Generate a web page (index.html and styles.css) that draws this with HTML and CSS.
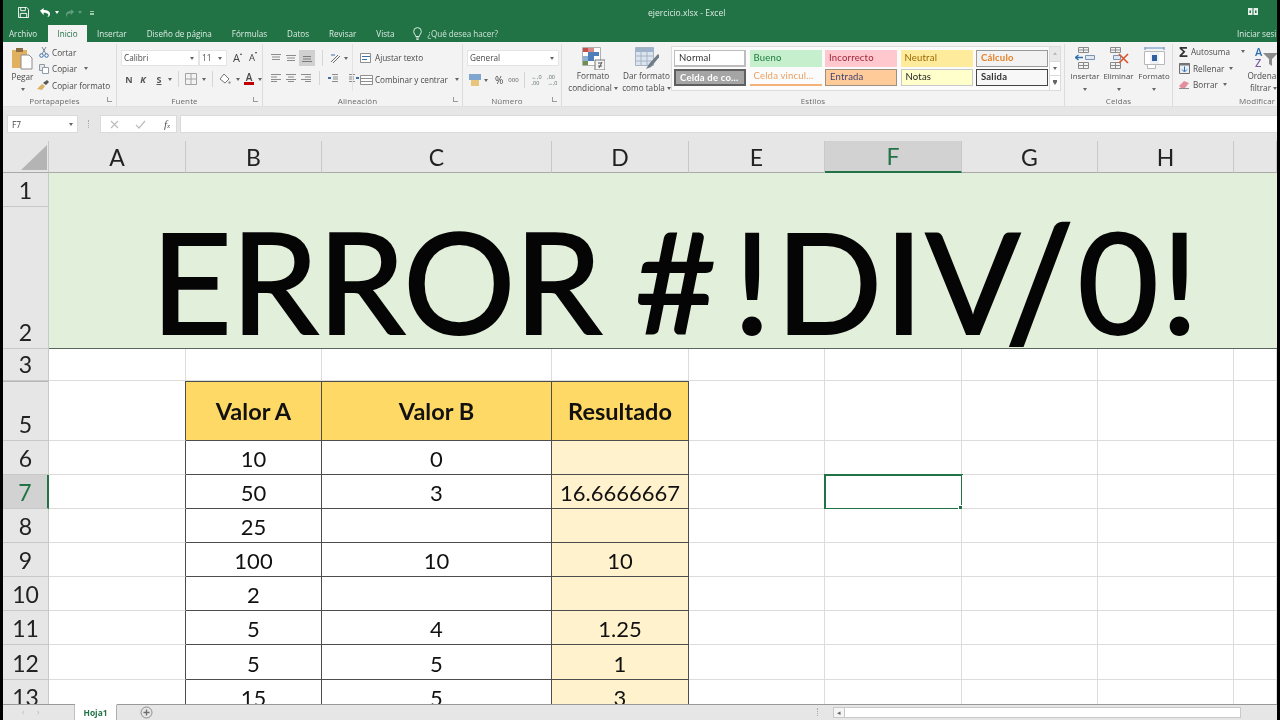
FILE: index.html
```html
<!DOCTYPE html>
<html lang="es">
<head>
<meta charset="utf-8">
<title>ejercicio.xlsx - Excel</title>
<link rel="stylesheet" href="styles.css">
</head>
<body>
<div class="app">
  <header class="titlebar">
    <div class="qat">
      <svg class="q-save" width="11" height="11" viewBox="0 0 12 12"><path d="M.5.5h9l2 2v9H.5z" fill="none" stroke="#fff"/><path d="M3 .5v3.5h5V.5M2.5 11.5V7h7v4.5" fill="none" stroke="#fff"/></svg>
      <svg class="q-undo" width="12" height="11" viewBox="0 0 13 12"><path d="M1 4l4-3v2.200c4 0 7 1.500 7 4.300 0 1.500-1 3-3 3.500 1-1 1.300-2 1-3-.5-1.300-2.500-1.800-5-1.800V9z" fill="#fff"/></svg>
      <span class="ar ar-w q-a1"></span>
      <svg class="q-redo" width="10" height="10" viewBox="0 0 12 11"><path d="M11 4L7 1v2.200C3 3.200 1 5 1 7.500 1 9 2 10 3 10.500 2 9 2 8 3 7c1-.8 2.500-1.200 4-1.200V8z" fill="#5f9d7e"/></svg>
      <span class="ar ar-f q-a2"></span>
      <span class="q-more"></span>
    </div>
    <div class="doc">ejercicio.xlsx - Excel</div>
    <svg class="book" width="10" height="7" viewBox="0 0 10 7"><path d="M0 0h4.500v7H0zM5.500 0H10v7H5.500z" fill="#e4efe9"/><path d="M1.500 2.500h1.500v2.500H1.500zM7 2.500h1.500v2.500H7z" fill="#217346"/></svg>
  </header>
  <nav class="tabs">
    <span class="tab t-file">Archivo</span>
    <span class="tab active">Inicio</span>
    <span class="tab">Insertar</span>
    <span class="tab">Diseño de página</span>
    <span class="tab">Fórmulas</span>
    <span class="tab">Datos</span>
    <span class="tab">Revisar</span>
    <span class="tab">Vista</span>
    <span class="tell">
      <svg width="9" height="13" viewBox="0 0 9 13"><path d="M2.700 9.500C2.500 7.500.7 6.700.7 4.400a3.800 3.800 0 0 1 7.600 0c0 2.300-1.800 3.100-2 5.100zM3 11h3M3.500 12.500h2" fill="none" stroke="#dcebe3"/></svg>
      ¿Qué desea hacer?
    </span>
    <span class="signin">Iniciar sesi</span>
  </nav>

  <section class="ribbon">
    <div class="group g-clip">
      <div class="g-body">
        <div class="paste">
          <svg width="21" height="23" viewBox="0 0 21 23"><path d="M0 3h15v18H0z" fill="#e1b160"/><path d="M4 1h7v4H4z" fill="#8a6d45"/><path d="M9 8h8l3 3v11H9z" fill="#fff" stroke="#8b8b8b"/></svg>
          <span class="lbl">Pegar</span>
          <span class="ar"></span>
        </div>
        <div class="clip-list">
          <div class="cl-row"><svg width="10" height="11" viewBox="0 0 10 11"><path d="M7 0L3 7M3 0l4 7" stroke="#7a8794" fill="none"/><circle cx="2.500" cy="8.500" r="1.800" fill="none" stroke="#3f6fa8"/><circle cx="7.500" cy="8.500" r="1.800" fill="none" stroke="#3f6fa8"/></svg>Cortar</div>
          <div class="cl-row"><svg width="10" height="10" viewBox="0 0 10 10"><path d="M.5.5h5v6h-5z" fill="#e8e8e8" stroke="#8e9aa8"/><path d="M3.500 3.500h6v6h-6z" fill="#fff" stroke="#8e9aa8"/></svg>Copiar <span class="ar ar-in"></span></div>
          <div class="cl-row"><svg class="cl-paint" width="12" height="10" viewBox="0 0 12 10"><path d="M0 9l5-5 3 2-3 4z" fill="#dcb163"/><path d="M6 3l4-3 2 2-3 3z" fill="#555"/></svg>Copiar formato</div>
        </div>
      </div>
      <div class="g-label launcher">Portapapeles<i class="launch"></i></div>
    </div>

    <div class="group g-font">
      <div class="g-body col">
        <div class="row r-font1">
          <span class="combo c-font">Calibri<span class="ar"></span></span>
          <span class="combo c-size">11<span class="ar"></span></span>
          <span class="grow">A<sup>▴</sup></span>
          <span class="shrink">A<sup>▾</sup></span>
        </div>
        <div class="row r-font2">
          <b class="fb">N</b><b class="fb fi">K</b><b class="fb fu">S</b><span class="ar"></span>
          <span class="vsep"></span>
          <svg class="ic-b" width="12" height="12" viewBox="0 0 12 12"><path d="M.5.5h11v11H.5zM6 .5v11M.5 6h11" fill="none" stroke="#a3a3a3"/></svg><span class="ar"></span>
          <span class="vsep"></span>
          <svg class="ic-f" width="12" height="12" viewBox="0 0 12 12"><path d="M5 1l5 5-4 4-5-4z" fill="#fff" stroke="#777"/><circle cx="10.500" cy="9.500" r="1.200" fill="#999"/></svg><span class="ar"></span>
          <span class="fcolor">A</span><span class="ar"></span>
        </div>
      </div>
      <div class="g-label launcher">Fuente<i class="launch"></i></div>
    </div>

    <div class="group g-align">
      <div class="g-body">
        <div class="al-icons">
          <div class="row al1">
            <svg width="10" height="8" viewBox="0 0 10 8"><path d="M0 .5h10M1 3h8M1 5.500h8" stroke="#8c8c8c"/></svg>
            <svg width="10" height="8" viewBox="0 0 10 8"><path d="M0 1.500h10M1 4h8M1 6.500h8" stroke="#8c8c8c"/></svg>
            <span class="sel"><svg width="10" height="8" viewBox="0 0 10 8"><path d="M1 2.500h8M1 5h8M0 7.500h10" stroke="#7a7a7a"/></svg></span>
            <span class="vsep"></span>
            <svg class="orient" width="11" height="11" viewBox="0 0 11 11"><path d="M1 9L8 2M3 10l7-7" stroke="#6e6e6e" fill="none"/><path d="M1 2h4" stroke="#3f6fa8"/></svg><span class="ar"></span>
          </div>
          <div class="row al2">
            <svg width="10" height="8" viewBox="0 0 10 8"><path d="M0 .5h10M0 3h6M0 5.500h10M0 7.500h6" stroke="#8c8c8c"/></svg>
            <svg width="10" height="8" viewBox="0 0 10 8"><path d="M0 .5h10M2 3h6M0 5.500h10M2 7.500h6" stroke="#8c8c8c"/></svg>
            <svg width="10" height="8" viewBox="0 0 10 8"><path d="M0 .5h10M4 3h6M0 5.500h10M4 7.500h6" stroke="#8c8c8c"/></svg>
            <span class="vsep"></span>
            <svg width="10" height="8" viewBox="0 0 10 8"><path d="M4 .5h6M5 3h5M5 5h5M4 7.500h6" stroke="#8c8c8c"/><path d="M0 4h3" stroke="#3f6fa8" stroke-width="2"/></svg>
            <svg class="ind2" width="10" height="8" viewBox="0 0 10 8"><path d="M0 .5h6M0 3h5M0 5h5M0 7.500h6" stroke="#8c8c8c"/><path d="M7 4h3" stroke="#3f6fa8" stroke-width="2"/></svg>
          </div>
        </div>
        <div class="wrap">
          <div class="wr"><svg width="13" height="10" viewBox="0 0 13 10"><path d="M.5.5h10v9H.5z" fill="#fff" stroke="#8e8e8e"/><path d="M2 3.500h8M2 6.500h5" stroke="#3f6fa8"/></svg>Ajustar texto</div>
          <div class="wr"><svg width="13" height="10" viewBox="0 0 13 10"><path d="M.5.5h12v9H.5z" fill="#fff" stroke="#8e8e8e"/><path d="M1 3.500h11M1 6.500h11" stroke="#8e8e8e"/></svg>Combinar y centrar<span class="ar ar-m"></span></div>
        </div>
      </div>
      <div class="g-label launcher">Alineación<i class="launch"></i></div>
    </div>

    <div class="group g-num">
      <div class="g-body col">
        <span class="combo c-num">General<span class="ar"></span></span>
        <div class="row r-num">
          <svg width="12" height="12" viewBox="0 0 12 12"><path d="M0 0h12v6H0z" fill="#7ea6cf"/><path d="M2 6h8v6H2z" fill="#e7c67c"/></svg><span class="ar"></span>
          <span class="pct">%</span><span class="k">000</span>
          <span class="vsep"></span>
          <span class="dec">←,0<br>,00</span><span class="dec d2">,00<br>→,0</span>
        </div>
      </div>
      <div class="g-label launcher">Número<i class="launch"></i></div>
    </div>

    <div class="group g-styles">
      <div class="g-body">
        <div class="big b-cf">
          <svg width="23" height="23" viewBox="0 0 23 23"><path d="M.5.5h18v18H.5z" fill="#fff" stroke="#b0b0b0"/><path d="M1 1h5v4H1z" fill="#c5504b"/><path d="M6 1h6v4H6z" fill="#d98a86"/><path d="M6 5h11v4H6z" fill="#4f7fb8"/><path d="M1 9h5v5H1z" fill="#8fb0d6"/><path d="M6 9h6v5H6z" fill="#4f7fb8"/><path d="M1 14h5v4H1z" fill="#6f8f4f"/><path d="M13 13h10v10H13z" fill="#f4f4f4" stroke="#777"/><path d="M16 16h4M16 19h4M20 15l-3 6" stroke="#555" fill="none"/></svg>
          <span class="lbl">Formato<br>condicional<span class="ar ar-in"></span></span>
        </div>
        <div class="big b-tf">
          <svg width="24" height="23" viewBox="0 0 24 23"><path d="M.5.5h18v18H.5z" fill="#dbe5f1" stroke="#a8b4c2"/><path d="M1 1h18v4H1z" fill="#9fb3cd"/><path d="M6 1v18M12 1v18M1 9h18M1 14h18" stroke="#a8b4c2"/><path d="M23 7l-9 10-3 5 5-2 9-11z" fill="#707b86"/></svg>
          <span class="lbl">Dar formato<br>como tabla<span class="ar ar-in"></span></span>
        </div>
        <div class="gallery">
          <div class="cells">
            <span class="st s-normal">Normal</span>
            <span class="st s-good">Bueno</span>
            <span class="st s-bad">Incorrecto</span>
            <span class="st s-neutral">Neutral</span>
            <span class="st s-calc">Cálculo</span>
            <span class="st s-check">Celda de co...</span>
            <span class="st s-link">Celda vincul...</span>
            <span class="st s-input">Entrada</span>
            <span class="st s-note">Notas</span>
            <span class="st s-out">Salida</span>
          </div>
          <div class="scroll">
            <span class="sb off"><i class="ar ar-up"></i></span>
            <span class="sb"><i class="ar"></i></span>
            <span class="sb"><i class="ar ar-line"></i></span>
          </div>
        </div>
      </div>
      <div class="g-label">Estilos</div>
    </div>

    <div class="group g-cells">
      <div class="g-body">
        <div class="cellbtn b-ins">
          <svg width="20" height="22" viewBox="0 0 20 22"><path d="M3.500.5h10v5h-10zM3.500 15.500h10v6h-10zM8.500 15.500v6M3.500 18.500h10M8.500.5v5M3.500 3h10" fill="none" stroke="#8a8a8a"/><path d="M10.500 8.500h9v4h-9z" fill="#dfe8f2" stroke="#7a94b0"/><path d="M0 10.500h8M3.500 8l-3 2.500 3 2.500" fill="none" stroke="#2f6fb0" stroke-width="1.300"/></svg>
          <span class="lbl">Insertar</span><span class="ar"></span>
        </div>
        <div class="cellbtn b-del">
          <svg width="21" height="22" viewBox="0 0 21 22"><path d="M2.500.5h10v5h-10zM2.500 15.500h10v6h-10zM7.500 15.500v6M2.500 18.500h10M7.500.5v5M2.500 3h10" fill="none" stroke="#8a8a8a"/><path d="M5.500 8.500h7v4h-7z" fill="#dfe8f2" stroke="#7a94b0"/><path d="M11 7l9 9M20 7l-9 9" stroke="#d9532c" stroke-width="1.600"/></svg>
          <span class="lbl">Eliminar</span><span class="ar"></span>
        </div>
        <div class="cellbtn b-fmt">
          <svg width="21" height="22" viewBox="0 0 21 22"><path d="M.5 4.500h20v13H.5z" fill="#fff" stroke="#b8b8b8"/><path d="M6 5h9v12H6z" fill="#eef2f7"/><path d="M8 8h5v6H8z" fill="#2f5f9e"/><path d="M1 1h19M1 0v3M20 0v3" stroke="#5b8ac0" fill="none"/><path d="M3.500 17.500h8v4h-8z" fill="#fff" stroke="#b8b8b8"/></svg>
          <span class="lbl">Formato</span><span class="ar"></span>
        </div>
      </div>
      <div class="g-label">Celdas</div>
    </div>

    <div class="group g-edit">
      <div class="g-body">
        <div class="ed-list">
          <div class="ed-row"><span class="sigma">Σ</span>Autosuma<span class="ar ar-w8"></span></div>
          <div class="ed-row"><svg width="11" height="11" viewBox="0 0 11 11"><path d="M.5.5h10v10H.5z" fill="#e6eef7" stroke="#6d6d6d"/><path d="M.5.5h10v2H.5z" fill="#777"/><path d="M5.500 3.500v5M3 6.500l2.500 2.500L8 6.500" fill="none" stroke="#2f6fb0"/></svg>Rellenar<span class="ar ar-in"></span></div>
          <div class="ed-row"><svg width="11" height="9" viewBox="0 0 11 9"><path d="M0 6l5-5 5 2-4 5H2z" fill="#e58f9b"/><path d="M0 8.500h10" stroke="#8b8b8b"/></svg>Borrar<span class="ar ar-in"></span></div>
        </div>
        <div class="sort">
          <svg width="23" height="22" viewBox="0 0 23 22"><text class="az a1" x="0" y="9">A</text><text class="az z1" x="0" y="20">Z</text><path d="M8 6h15l-6 6v7l-3-2v-5z" fill="#8b8b8b"/></svg>
          <span class="lbl">Ordenar<br>filtrar<span class="ar ar-in"></span></span>
        </div>
      </div>
      <div class="g-label mod">Modificar</div>
    </div>
  </section>

  <div class="gap"></div>
  <div class="fbar">
    <span class="namebox">F7<span class="ar"></span></span>
    <span class="dots"></span>
    <span class="fbtns">
      <svg width="9" height="9" viewBox="0 0 9 9"><path d="M1 1l7 7M8 1L1 8" stroke="#bdbdbd" stroke-width="1.200"/></svg>
      <svg width="11" height="9" viewBox="0 0 11 9"><path d="M1 5l3 3 6-7" fill="none" stroke="#bdbdbd" stroke-width="1.200"/></svg>
      <i class="fx">f<small>x</small></i>
    </span>
    <span class="finput"></span>
  </div>
  <div class="gap"></div>

  <div class="sheetwrap">
    <table class="sheet">
      <colgroup>
        <col class="c0"><col class="w137"><col class="w136"><col class="w230"><col class="w137"><col class="w136"><col class="w137"><col class="w136"><col class="w136"><col class="c9">
      </colgroup>
      <thead>
        <tr class="h0">
          <th class="corner"><svg width="28" height="27" viewBox="0 0 28 27"><path d="M27 1v25H1z" fill="#b4b4b4"/></svg></th>
          <th>A</th><th>B</th><th>C</th><th>D</th><th>E</th><th class="hsel">F</th><th>G</th><th>H</th><th></th>
        </tr>
      </thead>
      <tbody>
        <tr class="h1"><th class="rh">1</th><td class="banner" colspan="9" rowspan="2"><div class="bigtext"><span class="w-err">ERROR</span> <span class="w-hash">#</span><span class="w-bang">!</span>DIV<span class="slash">/</span>0!</div></td></tr>
        <tr class="h2"><th class="rh">2</th></tr>
        <tr class="h3"><th class="rh">3</th><td></td><td></td><td></td><td></td><td></td><td></td><td></td><td></td><td></td></tr>
        <tr class="h5"><th class="rh hid">5</th><td class="lb"></td><td class="y">Valor A</td><td class="y">Valor B</td><td class="y">Resultado</td><td></td><td></td><td></td><td></td><td></td></tr>
        <tr class="h6"><th class="rh">6</th><td class="lb"></td><td class="t">10</td><td class="t">0</td><td class="t p"></td><td></td><td></td><td></td><td></td><td></td></tr>
        <tr class="h6"><th class="rh rsel">7</th><td class="lb"></td><td class="t">50</td><td class="t">3</td><td class="t p">16.6666667</td><td></td><td class="active-cell"><span class="handle"></span></td><td></td><td></td><td></td></tr>
        <tr class="h6"><th class="rh">8</th><td class="lb"></td><td class="t">25</td><td class="t"></td><td class="t p"></td><td></td><td></td><td></td><td></td><td></td></tr>
        <tr class="h6"><th class="rh">9</th><td class="lb"></td><td class="t">100</td><td class="t">10</td><td class="t p">10</td><td></td><td></td><td></td><td></td><td></td></tr>
        <tr class="h6"><th class="rh">10</th><td class="lb"></td><td class="t">2</td><td class="t"></td><td class="t p"></td><td></td><td></td><td></td><td></td><td></td></tr>
        <tr class="h6"><th class="rh">11</th><td class="lb"></td><td class="t">5</td><td class="t">4</td><td class="t p">1.25</td><td></td><td></td><td></td><td></td><td></td></tr>
        <tr class="h12"><th class="rh">12</th><td class="lb"></td><td class="t">5</td><td class="t">5</td><td class="t p">1</td><td></td><td></td><td></td><td></td><td></td></tr>
        <tr class="h6"><th class="rh">13</th><td class="lb"></td><td class="t">15</td><td class="t">5</td><td class="t p">3</td><td></td><td></td><td></td><td></td><td></td></tr>
      </tbody>
    </table>
  </div>

  <footer class="sheetbar">
    <span class="nav"><i>‹</i><i>›</i></span>
    <span class="sheettab">Hoja1</span>
    <svg class="plus" width="13" height="13" viewBox="0 0 13 13"><circle cx="6.500" cy="6.500" r="5.500" fill="none" stroke="#8c8c8c"/><path d="M6.500 3.500v6M3.500 6.500h6" stroke="#6e6e6e" stroke-width="1.300"/></svg>
    <span class="dots d-b"></span>
    <span class="hscroll"><i class="sbtn">◂</i><i class="track"></i></span>
  </footer>
</div>
</body>
</html>
```
FILE: styles.css
```css
* { box-sizing: border-box; }
html, body { margin: 0; padding: 0; height: 100%; overflow: hidden; background: #000; }
body { width: 1280px; height: 720px; font-family: "Open Sans", "Liberation Sans", sans-serif; }
.app { width: 1274px; height: 720px; margin-left: 3px; display: flex; flex-direction: column; background: #e6e6e6; overflow: hidden; filter: blur(.35px); }
svg { display: block; flex: none; }

.ar { display: inline-block; width: 0; height: 0; border-left: 2.5px solid transparent; border-right: 2.5px solid transparent; border-top: 3px solid #666; flex: none; }
.ar-w { border-top-color: #fff; }
.ar-f { border-top-color: #5f9d7e; }
.ar-in { margin-left: 2px; vertical-align: middle; }
.ar-w8 { margin-left: 8px; }
.ar-m { margin-left: 5px; }

.titlebar { height: 25px; background: #217346; display: flex; align-items: center; position: relative; flex: none; }
.qat { display: flex; align-items: center; padding-left: 15px; }
.q-undo { margin-left: 10px; }
.q-a1 { margin-left: 4px; }
.q-redo { margin-left: 6px; }
.q-a2 { margin-left: 3px; }
.q-more { margin-left: 8px; width: 4px; height: 4px; border-top: 1px solid #9fc6b1; border-bottom: 2px solid #9fc6b1; }
.doc { position: absolute; left: 645px; top: 6px; color: #dcebe3; font-size: 8.5px; line-height: 14px; white-space: nowrap; }
.book { position: absolute; left: 1245px; top: 8px; }

.tabs { height: 17px; background: #217346; display: flex; align-items: stretch; font-size: 8.1px; color: #dcebe3; position: relative; flex: none; }
.tab { padding: 0 10px; line-height: 17px; white-space: nowrap; }
.t-file { padding: 0 9px 0 6px; width: 45px; }
.tab.active { background: #f3f3f3; color: #217346; width: 39px; padding: 0; text-align: center; }
.tell { display: flex; align-items: center; gap: 5px; margin-left: 9px; white-space: nowrap; color: #cfe3d8; }
.signin { position: absolute; left: 1234px; top: 0; line-height: 17px; white-space: nowrap; }

.ribbon { height: 65px; background: #f3f3f3; display: flex; flex: none; font-size: 8.2px; color: #4a4a4a; overflow: hidden; border-bottom: 1px solid #e0e0e0; }
.group { display: flex; flex-direction: column; border-right: 1px solid #dcdcdc; flex: none; position: relative; margin: 2px 0 0; }
.g-body { flex: 1; display: flex; min-height: 0; }
.g-body.col { flex-direction: column; }
.g-label { height: 12px; line-height: 13px; text-align: center; color: #6a6a6a; font-size: 8px; letter-spacing: .1px; position: relative; white-space: nowrap; flex: none; }
.launcher { padding-right: 10px; }
.mod { text-align: left; padding-left: 66px; }
.launch { position: absolute; right: 4px; top: 3px; width: 5px; height: 5px; border-left: 1px solid #999; border-bottom: 1px solid #999; }
.lbl { line-height: 12px; text-align: center; white-space: nowrap; }
.row { display: flex; align-items: center; }
.vsep { width: 1px; height: 16px; background: #d6d6d6; flex: none; }

.g-clip { width: 114px; }
.g-font { width: 146px; }
.g-align { width: 200px; }
.g-num { width: 99px; }
.g-styles { width: 503px; }
.g-cells { width: 108px; }
.g-edit { width: 104px; border-right: 0; }

.paste { width: 34px; display: flex; flex-direction: column; align-items: center; padding: 3px 0 0 5px; flex: none; }
.paste .lbl { margin-top: 1px; }
.paste .ar { margin-top: 5px; }
.clip-list { padding: 2px 0 0 2px; display: flex; flex-direction: column; gap: 4px; }
.cl-row { display: flex; align-items: center; gap: 3px; height: 12.500px; white-space: nowrap; }
.cl-paint { margin-left: -2px; }
.cl-row .ar-in { margin-left: 4px; }

.combo { background: #fff; border: 1px solid #e4e4e4; height: 16px; line-height: 14px; padding-left: 2px; font-size: 8.2px; display: flex; align-items: center; justify-content: space-between; padding-right: 4px; flex: none; }
.r-font1 { padding: 6px 0 0 4px; }
.c-font { width: 78px; }
.c-size { width: 28px; margin-left: 0; }
.grow, .shrink { font-size: 11px; margin-left: 6px; color: #444; line-height: 14px; }
.shrink { font-size: 9.500px; margin-left: 7px; }
.grow sup, .shrink sup { font-size: 4px; vertical-align: 7px; line-height: 0; }
.r-font2 { padding: 5px 0 0 5px; }
.fb { font-size: 9px; width: 14px; text-align: center; color: #555; }
.fi { font-style: italic; }
.fu { text-decoration: underline; margin-left: 2px; margin-right: 2px; }
.r-font2 .vsep { margin: 0 6px; }
.ic-b, .ic-f { margin-right: 5px; }
.fcolor { font-size: 10px; font-weight: 600; margin: 0 4px 0 4px; color: #444; border-bottom: 3px solid #c00000; line-height: 9px; width: 10px; text-align: center; }

.al-icons { width: 89px; padding: 6px 0 0 8px; flex: none; }
.al1 { height: 16px; gap: 5px; }
.sel { width: 16px; height: 16px; background: #d0d0d0; display: flex; align-items: center; justify-content: center; margin-left: -2px; }
.al1 .vsep { margin: 0 2px; }
.orient { margin-right: -2px; }
.al2 { margin-top: 6px; height: 12px; gap: 5px; }
.al2 .vsep { margin: 0 3px; height: 14px; }
.ind2 { margin-left: 6px; }
.wrap { padding: 7px 0 0 7px; display: flex; flex-direction: column; gap: 9px; border-left: 1px solid #e2e2e2; margin-bottom: 3px; letter-spacing: -.05px; }
.wr { display: flex; align-items: center; gap: 2px; height: 13px; white-space: nowrap; }

.g-num .c-num { width: 92px; margin: 6px 0 0 4px; }
.r-num { padding: 6px 0 0 6px; gap: 3px; }
.pct { font-size: 10px; margin-left: 4px; color: #444; }
.k { font-size: 6px; margin-left: 2px; color: #555; }
.r-num .vsep { margin: 0 4px 0 2px; }
.dec { font-size: 5.500px; line-height: 6px; color: #566; white-space: nowrap; width: 14px; }
.d2 { margin-left: -1px; }

.big { display: flex; flex-direction: column; align-items: center; padding-top: 3px; flex: none; }
.b-cf { width: 60px; margin-left: 1px; }
.b-tf { width: 49px; margin-left: -1px; }
.gallery { display: flex; margin: 2px 0 0 0; height: 45px; background: #fbfbfb; border: 1px solid #dcdcdc; }
.cells { display: grid; grid-template-columns: repeat(5, 72px); grid-auto-rows: 17px; column-gap: 3.500px; row-gap: 2px; padding: 3px 1px 0 2px; width: 377px; }
.st { padding-left: 4px; line-height: 16px; letter-spacing: .2px; white-space: nowrap; overflow: hidden; font-family: Lato, "Open Sans", sans-serif; font-size: 9.500px; }
.s-normal { background: #fff; border: 1px solid #bdbdbd; color: #333; border-width: 1px 2px 2px 1px; line-height: 14px; }
.s-good { background: #c6efce; color: #1e7a3c; }
.s-bad { background: #ffc7ce; color: #a0253a; }
.s-neutral { background: #ffeb9c; color: #9c6500; }
.s-calc { background: #f2f2f2; border: 1px solid #9a9a9a; color: #e57f25; font-weight: 700; line-height: 14px; }
.s-check { background: #a5a5a5; border: 2px solid #5f5f5f; color: #fff; font-weight: 700; line-height: 13px; }
.s-link { color: #e8a063; border-bottom: 2px solid #f2b27a; line-height: 14px; }
.s-input { background: #ffcc99; border: 1px solid #9d9080; color: #3f3f76; line-height: 14px; }
.s-note { background: #ffffcc; border: 1px solid #c8c8c8; color: #222; line-height: 14px; }
.s-out { background: #f7f7f7; border: 1px solid #444; color: #333; font-weight: 700; line-height: 14px; }
.scroll { width: 11px; display: flex; flex-direction: column; border-left: 1px solid #dcdcdc; }
.sb { flex: 1; display: flex; align-items: center; justify-content: center; background: #fff; border-bottom: 1px solid #dcdcdc; }
.sb.off { background: #e8e8e8; }
.sb:last-child { border-bottom: 0; }
.ar-up { border-top: 0; border-bottom: 3px solid #bbb; }
.ar-line { box-shadow: 0 -2px 0 0 #666; }

.g-cells .g-body { padding-left: 6px; gap: 4px; }
.cellbtn { display: flex; flex-direction: column; align-items: center; padding-top: 3px; font-size: 7.900px; }
.cellbtn .lbl { margin-top: 1px; }
.cellbtn .ar { margin-top: 6px; }
.b-ins { width: 28px; }
.b-del { width: 31px; }
.b-fmt { width: 32px; }

.ed-list { padding: 1px 0 0 6px; width: 71px; display: flex; flex-direction: column; gap: 3.500px; flex: none; }
.ed-row { display: flex; align-items: center; gap: 3px; height: 13px; white-space: nowrap; }
.ed-row .ar-in { margin-left: 2px; }
.sigma { font-size: 15px; line-height: 13px; color: #333; width: 12px; font-weight: 700; }
.sort { display: flex; flex-direction: column; align-items: flex-start; padding-top: 3px; gap: 1px; }
.sort svg { margin-left: 11px; }
.sort .lbl { text-align: center; width: 39px; }
.az { font-size: 11px; font-weight: 600; }
.a1 { fill: #2f6fb0; }
.z1 { fill: #7a5fa0; }

.gap { height: 8px; background: #e6e6e6; flex: none; }
.fbar { height: 18px; background: #e6e6e6; display: flex; flex: none; align-items: stretch; padding-left: 4px; font-size: 8.4px; color: #444; }
.namebox { width: 71px; background: #fff; border: 1px solid #dadada; display: flex; align-items: center; justify-content: space-between; padding: 0 4px; }
.dots { width: 22px; position: relative; }
.dots::after { content: ""; position: absolute; left: 10px; top: 5px; height: 8px; border-left: 1px dotted #aaa; }
.fbtns { width: 77px; background: #fff; border: 1px solid #dadada; display: flex; align-items: center; padding-left: 9px; gap: 16px; }
.fx { font-family: "Liberation Serif", serif; font-size: 11px; color: #555; margin-left: 2px; }
.fx small { font-size: 7px; }
.finput { flex: 1; margin-left: 3px; background: #fff; border: 1px solid #dadada; border-right: 0; }

.sheetwrap { flex: 1; min-height: 0; overflow: hidden; background: #fff; }
.sheet { border-collapse: separate; border-spacing: 0; table-layout: fixed; width: 1274px; font-family: Lato, "Liberation Sans", sans-serif; color: #111; }
.c0 { width: 46px; }
.w137 { width: 137px; }
.w136 { width: 136px; }
.w230 { width: 230px; }
.c9 { width: 43px; }
.sheet th { background: #e6e6e6; font-weight: 400; font-size: 23px; padding: 0; border-right: 1px solid #c8c8c8; border-bottom: 1px solid #c8c8c8; color: #222; }
.sheet td { padding: 0; border-right: 1px solid #dcdcdc; border-bottom: 1px solid #dcdcdc; font-size: 22px; text-align: center; background: #fff; position: relative; }
.h0 { height: 32px; }
.h0 th { border-bottom-color: #a9a9a9; vertical-align: middle; }
.corner { position: relative; }
.corner svg { margin: 1px 0 0 17px; }
.sheet .hsel { background: #d2d2d2; color: #217346; border-bottom: 2px solid #217346; }
.h1 { height: 34px; }
.h2 { height: 142px; }
.h3 { height: 32px; }
.h5 { height: 60px; }
.h6 { height: 34px; }
.h12 { height: 35px; }
.sheet .rh { vertical-align: bottom; line-height: 26px; text-align: center; padding-bottom: 3px; }
.sheet .hid { border-top: 1px solid #b8b8b8; }
.sheet .rsel { background: #d2d2d2; color: #217346; border-right: 2px solid #217346; }
.sheet .banner { background: #e2efda; border-right: 0; border-bottom: 1px solid #5c665c; vertical-align: top; }
.bigtext { height: 174px; overflow: hidden; font-size: 140px; line-height: 174px; text-align: left; padding: 20px 0 0 102px; white-space: nowrap; color: #050505; letter-spacing: 2px; -webkit-text-stroke: 2px #050505; }
.w-err { letter-spacing: -1px; }
.w-hash { letter-spacing: 17px; margin-left: -4px; }
.w-bang { letter-spacing: 5px; }
.slash { display: inline-block; margin: 0 -6px 0 -4px; transform: translate(-13px, 6px) scale(1.2, 1.27); }
.sheet .y { background: #ffd966; font-weight: 700; font-size: 23.500px; border: 1px solid #4d4d4d; border-width: 1px 1px 1px 0; vertical-align: middle; }
.sheet .lb { border-right-color: #4d4d4d; }
.sheet .t { border-right-color: #4d4d4d; border-bottom-color: #4d4d4d; vertical-align: bottom; line-height: 30px; }
.sheet .p { background: #fff2cc; }
.sheet .active-cell { outline: 2px solid #217346; outline-offset: -1px; }
.handle { position: absolute; right: -2px; bottom: -2px; width: 5px; height: 5px; background: #217346; border: 1px solid #fff; }

.sheetbar { height: 16px; flex: none; background: #e6e6e6; border-top: 1px solid #999; display: flex; align-items: stretch; position: relative; font-size: 8.4px; color: #aaa; }
.nav { width: 72px; display: flex; gap: 12px; padding-left: 19px; border-right: 1px solid #c0c0c0; }
.nav i { font-style: normal; font-size: 9px; line-height: 14px; color: #bbb; }
.sheettab { width: 42px; background: #fff; color: #217346; font-weight: 700; text-align: center; line-height: 15px; border-right: 1px solid #b0b0b0; margin-top: -1px; border-top: 1px solid #fff; }
.plus { margin: 1px 0 0 23px; }
.d-b { width: 22px; margin-left: 658px; }
.d-b::after { left: 6px; top: 3px; }
.hscroll { display: flex; width: 408px; height: 11px; margin: 2px 0 0 0; background: #fff; border: 1px solid #c8c8c8; }
.sbtn { width: 11px; font-style: normal; font-size: 7px; line-height: 9px; text-align: center; color: #666; background: #f5f5f5; border-right: 1px solid #c8c8c8; }
.track { flex: 1; background: #fff; }
```
